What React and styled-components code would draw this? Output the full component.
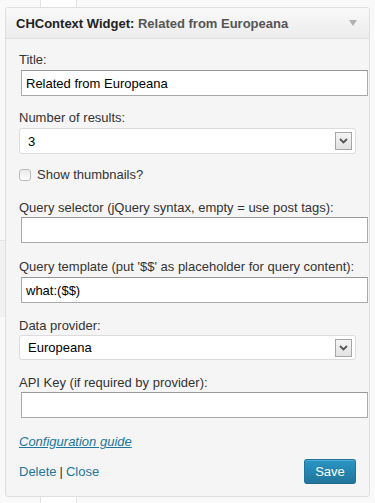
import React from "react";
import styled, { createGlobalStyle } from "styled-components";

const GlobalStyle = createGlobalStyle`
  html, body {
    margin: 0;
    padding: 0;
  }
  body {
    width: 375px;
    height: 503px;
    overflow: hidden;
    font-family: "Liberation Sans", Arial, sans-serif;
    font-size: 13px;
    color: #333;
    background-color: #f9f9f9;
    background-image:
      linear-gradient(to right, transparent 40px, #e1e1e1 40px, #e1e1e1 41px, #fff 41px, #fff 76px, #e1e1e1 76px, #e1e1e1 77px, transparent 77px),
      linear-gradient(to bottom, transparent 240px, #e6e6e6 240px, #e6e6e6 241px, #f1f1f1 241px, #f1f1f1 317px, transparent 317px);
    background-size: 100% 100%, 5px 100%;
    background-repeat: no-repeat;
  }
`;

const Page = styled.div`
  padding: 7px 5px 6px 5px;
`;

const Widget = styled.div`
  border: 1px solid #dfdfdf;
  border-radius: 3px;
  background: #f5f5f5;
  box-shadow: inset 0 1px 0 #fff;
  overflow: hidden;
`;

const WidgetTop = styled.div`
  height: 30px;
  display: flex;
  align-items: center;
  justify-content: space-between;
  padding: 0 10px 0 10px;
  background: linear-gradient(to bottom, #f9f9f9, #ececec);
  border-bottom: 1px solid #dfdfdf;
`;

const WidgetTitle = styled.h4`
  margin: 0;
  font-size: 13px;
  font-weight: bold;
  color: #222;
  white-space: nowrap;
`;

const InTitle = styled.span`
  color: #555;
`;

const Toggle = styled.span`
  width: 0;
  height: 0;
  border-left: 4px solid transparent;
  border-right: 4px solid transparent;
  border-top: 6px solid #b1b1b1;
  margin-right: 2px;
`;

const WidgetInside = styled.div`
  padding: 13px 13px 12px 13px;
  display: flex;
  flex-direction: column;
`;

const Field = styled.div`
  display: flex;
  flex-direction: column;
  gap: ${(p) => p.$gap ?? 2}px;
  margin-top: ${(p) => p.$mt ?? 0}px;
`;

const Label = styled.label`
  display: block;
  line-height: 16px;
  color: #333;
  white-space: nowrap;
`;

const TextInput = styled.input`
  box-sizing: border-box;
  width: 347px;
  height: 26px;
  margin: 0 0 0 2px;
  padding: 0 4px;
  border: 1px solid #aaa;
  border-top-color: #999;
  background: #fff;
  font-family: "Liberation Sans", Arial, sans-serif;
  font-size: 13px;
  color: #000;
  outline: none;
`;

const SelectBox = styled.div`
  box-sizing: border-box;
  width: 337px;
  height: ${(p) => p.$h ?? 26}px;
  display: flex;
  align-items: center;
  justify-content: space-between;
  padding: 0 3px 0 8px;
  border: 1px solid #dcdcdc;
  border-radius: 3px;
  background: #fff;
  color: #000;
`;

const SelectButton = styled.span`
  box-sizing: border-box;
  width: 17px;
  height: 18px;
  display: flex;
  align-items: center;
  justify-content: center;
  border: 1px solid #a6a6a6;
  background: linear-gradient(to bottom, #f4f4f4, #e2e2e2);
`;

const CheckRow = styled.label`
  display: flex;
  align-items: center;
  gap: 6px;
  margin-top: ${(p) => p.$mt ?? 0}px;
  line-height: 16px;
  color: #333;
`;

const CheckBox = styled.span`
  box-sizing: border-box;
  width: 12px;
  height: 12px;
  border: 1px solid #bbb;
  border-radius: 3px;
  background: linear-gradient(to bottom, #e9e9e9, #fff);
`;

const GuideLink = styled.a`
  display: block;
  margin-top: ${(p) => p.$mt ?? 0}px;
  line-height: 16px;
  font-style: italic;
  color: #21759b;
  text-decoration: underline;
  align-self: flex-start;
`;

const Footer = styled.div`
  display: flex;
  align-items: center;
  justify-content: space-between;
  margin-top: ${(p) => p.$mt ?? 0}px;
  width: 337px;
`;

const Links = styled.div`
  color: #21759b;
  line-height: 16px;
`;

const FooterLink = styled.a`
  color: #21759b;
  text-decoration: none;
`;

const Sep = styled.span`
  color: #333;
  padding: 0 3px;
`;

const SaveButton = styled.button`
  box-sizing: border-box;
  width: 52px;
  height: 25px;
  padding: 0;
  border: 1px solid #21759b;
  border-bottom-color: #1e6a8d;
  border-radius: 3px;
  background: linear-gradient(to bottom, #2a95c5, #21759b);
  box-shadow: inset 0 1px 0 rgba(120, 200, 230, 0.5);
  color: #fff;
  font-family: "Liberation Sans", Arial, sans-serif;
  font-size: 13px;
  text-shadow: 0 -1px 0 rgba(0, 0, 0, 0.1);
`;

const Chevron = () => (
  <svg width="9" height="6" viewBox="0 0 9 6">
    <path d="M1 1 L4.5 4.5 L8 1" fill="none" stroke="#555" strokeWidth="1.8" />
  </svg>
);

export default function App() {
  return (
    <>
      <GlobalStyle />
      <Page>
        <Widget>
          <WidgetTop>
            <WidgetTitle>
              CHContext Widget: <InTitle>Related from Europeana</InTitle>
            </WidgetTitle>
            <Toggle />
          </WidgetTop>
          <WidgetInside>
            <Field>
              <Label>Title:</Label>
              <TextInput defaultValue="Related from Europeana" />
            </Field>
            <Field $mt={14}>
              <Label>Number of results:</Label>
              <SelectBox>
                <span>3</span>
                <SelectButton>
                  <Chevron />
                </SelectButton>
              </SelectBox>
            </Field>
            <CheckRow $mt={13}>
              <CheckBox />
              <span>Show thumbnails?</span>
            </CheckRow>
            <Field $mt={17} $gap={1}>
              <Label>Query selector (jQuery syntax, empty = use post tags):</Label>
              <TextInput />
            </Field>
            <Field $mt={16} $gap={2}>
              <Label>Query template (put '$$' as placeholder for query content):</Label>
              <TextInput defaultValue="what:($$)" />
            </Field>
            <Field $mt={15} $gap={1}>
              <Label>Data provider:</Label>
              <SelectBox $h={25}>
                <span>Europeana</span>
                <SelectButton>
                  <Chevron />
                </SelectButton>
              </SelectBox>
            </Field>
            <Field $mt={15} $gap={1}>
              <Label>API Key (if required by provider):</Label>
              <TextInput />
            </Field>
            <GuideLink href="#" $mt={16}>
              Configuration guide
            </GuideLink>
            <Footer $mt={9}>
              <Links>
                <FooterLink href="#">Delete</FooterLink>
                <Sep>|</Sep>
                <FooterLink href="#">Close</FooterLink>
              </Links>
              <SaveButton>Save</SaveButton>
            </Footer>
          </WidgetInside>
        </Widget>
      </Page>
    </>
  );
}
